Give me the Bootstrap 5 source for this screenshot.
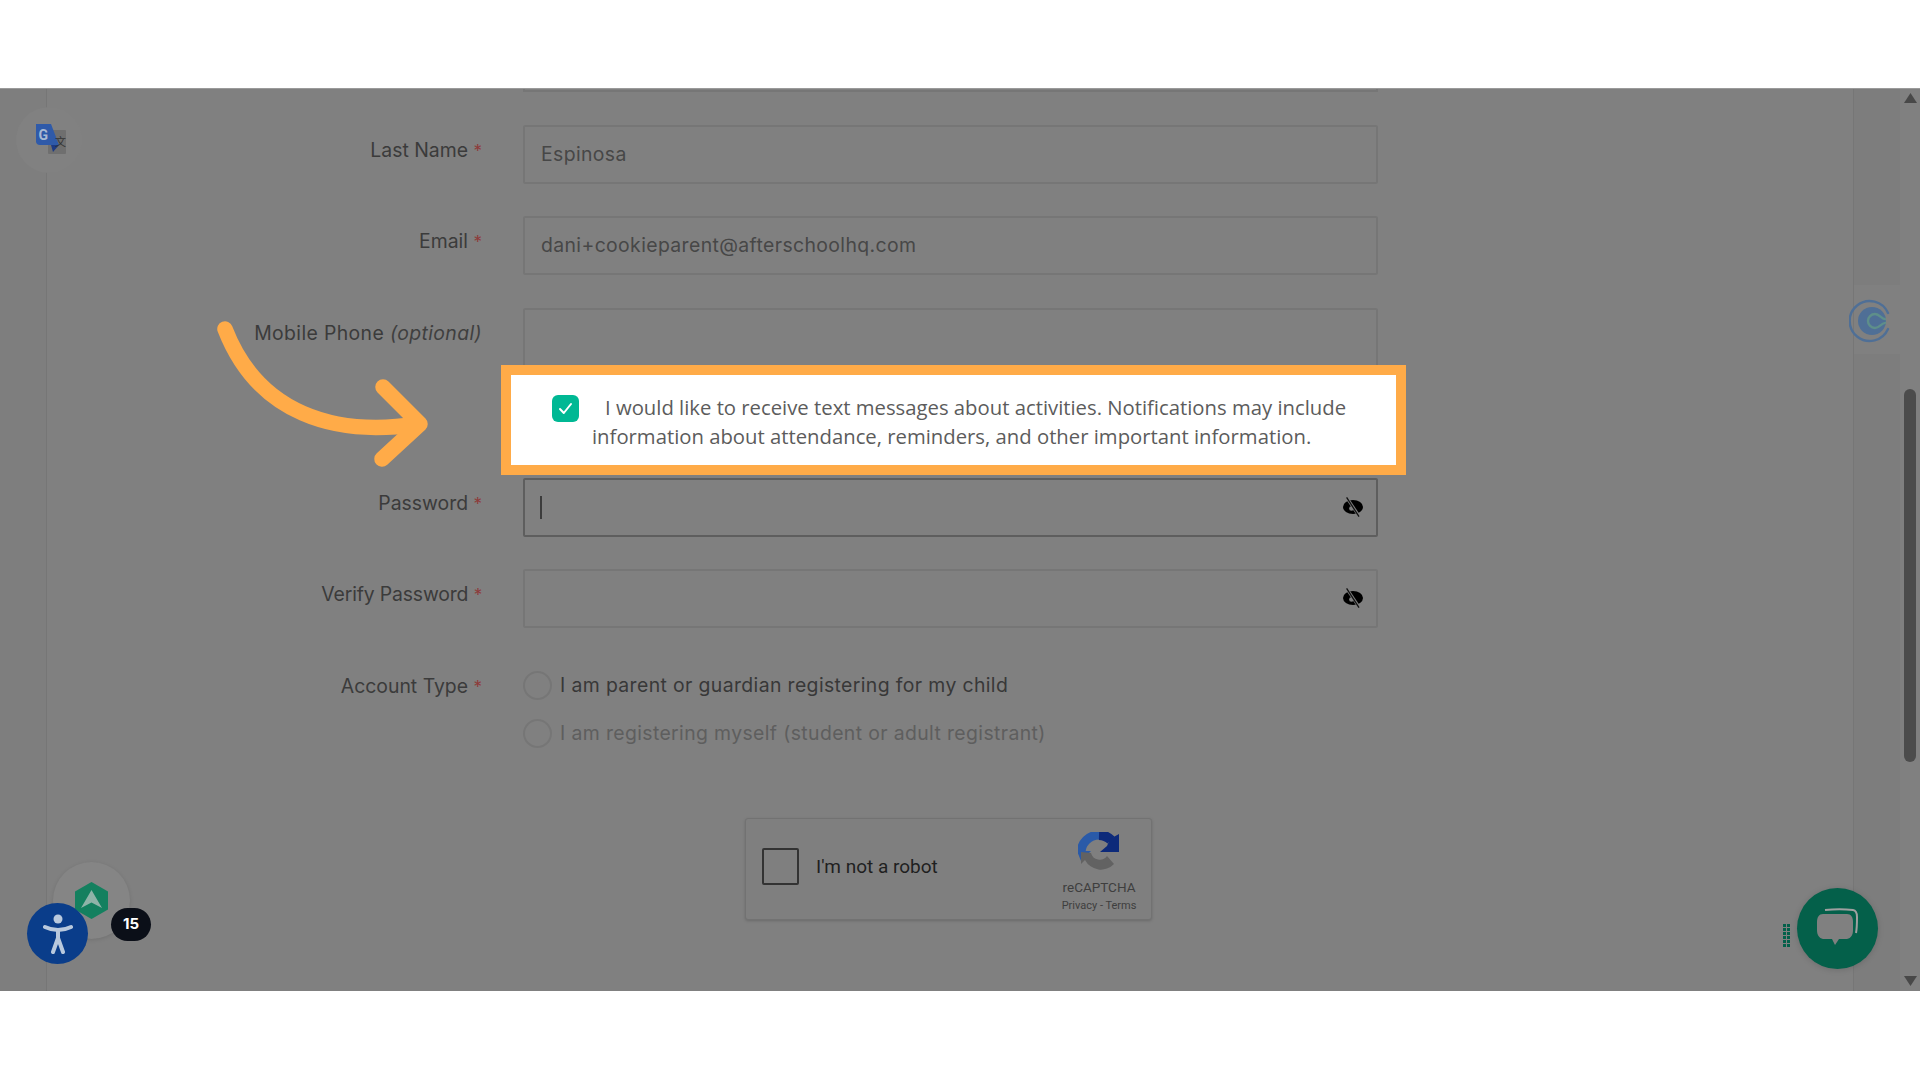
<!DOCTYPE html>
<html lang="en">
<head>
<meta charset="utf-8">
<title>Register</title>
<link href="https://cdn.jsdelivr.net/npm/bootstrap@5.3.0/dist/css/bootstrap.min.css" rel="stylesheet">
<style>
html,body{margin:0;height:1080px;background:#fff;overflow:hidden}
.stage{margin-top:88px;height:903px;background:#808080;overflow:hidden;font-family:Inter,"Liberation Sans",sans-serif;border-top:1px solid #9a9a9a}
.rail-l{left:0;top:0;bottom:0;width:47px;background:#7e7e7e;border-right:1px solid #767676}
.rail-r{left:1853px;top:0;bottom:0;width:47px;background:#7d7d7d;border-left:1px solid #767676}
.form-col{margin-left:46px;width:1332px;margin-top:-1px;letter-spacing:.38px}
.stub{height:4px;margin-left:477px;width:855px;border:2px solid #767676;border-top:0;margin-bottom:33px}
.f-row{margin-bottom:33px}
.f-row.tight{margin-bottom:32px}
.f-label{width:436px;margin-right:41px;text-align:right;font-size:19.4px;color:#3b3b3b;line-height:24px;padding-top:13px;flex:none;letter-spacing:0}
.f-label.wide{letter-spacing:.38px}
.f-label.snug{letter-spacing:-.15px}
.f-label i{color:#3f3f3f}
.req{color:#8e3a3a;font-size:17px}
.f-wrap{width:855px;flex:none}
.f-input.form-control{height:59px;width:855px;background:transparent;border:2px solid #767676;border-radius:2px;color:#474747;font-size:19.4px;padding:0 16px 2px;font-family:inherit;letter-spacing:inherit;box-shadow:none}
.f-input.focused.form-control{border-color:#5e5e5e}
.spot{margin:-35px 0 3px 455px;width:905px;height:110px;background:#fff;border:10px solid #ffab48;padding:18px 30px 0 41px;letter-spacing:0}
.tick{width:27px;height:27px;flex:none;margin:2px 13px 0 0;background:#00b894;border-radius:6px}
.spot p{margin:0;text-indent:13px;font-family:"Open Sans","Liberation Sans",sans-serif;font-size:20.3px;line-height:29px;color:#5c5c5c;white-space:nowrap}
.caret-bar{left:17px;top:18px;width:2px;height:23px;background:#3c3c3c}
.eye{right:14px;top:18px;width:22px;height:22px}
.type-row{margin-top:43px}
.type-row .f-label{padding-top:3px}
.r-line{height:29px;margin-bottom:19px;font-size:19.4px;line-height:29px;color:#383838}
.r-line.off{color:#5e5e5e}
.r-line .form-check-input{width:29px;height:29px;margin:0 8px 0 0;background-color:transparent;border:2px solid #767676;flex:none}
.cap-box{width:407px;height:102px;margin:51px 0 0 699px;background:#7f7f7f;border:1px solid #727272;border-radius:3px;box-shadow:0 1px 3px rgba(0,0,0,.18);padding:0 8px 0 16px;letter-spacing:0}
.cap-check{width:37px;height:37px;border:2px solid #333;border-radius:2px;margin-top:-6px;flex:none}
.cap-text{font-family:Roboto,"Liberation Sans",sans-serif;font-size:19px;color:#1f1f1f;margin:-4px 0 0 17px}
.cap-brand{margin-left:auto;width:88px;font-family:Roboto,"Liberation Sans",sans-serif;color:#3e3e3e;text-align:center;line-height:1;margin-top:5px}
.cap-brand svg{display:block;margin:0 auto 7px}
.cap-name{font-size:13.5px;margin-bottom:5px}
.cap-links{font-size:11px;white-space:nowrap}
.arrow{left:0;top:0;width:1920px;height:903px;pointer-events:none}
.gt-disc{left:16px;top:18px;width:66px;height:66px;border-radius:50%;background:#818181}
.gt-icon{left:34px;top:33px}
.cal-box{left:1854px;top:196px;width:46px;height:69px;background:#808080}
.cal-icon{left:1849px;top:210px}
.ah-disc{left:53px;top:773px;width:77px;height:77px;border-radius:50%;background:#858585;box-shadow:0 1px 4px rgba(0,0,0,.12)}
.ah-hex{left:75px;top:793px}
.a11y{left:27px;top:814px;width:61px;height:61px;border-radius:50%;background:#0a3d8a}
.count{left:111px;top:819px;width:40px;height:33px;border-radius:17px;background:#0b0f18;color:#fff;font-size:15px;font-weight:700;font-family:Inter,"Liberation Sans",sans-serif}
.chat{left:1797px;top:799px;width:81px;height:81px;border-radius:50%;background:#04604a;box-shadow:0 1px 6px rgba(0,0,0,.15)}
.grip{left:1783px;top:835px}
.sb-track{left:1900px;top:0;bottom:0;width:20px;background:#808080}
.sb-thumb{left:1904px;top:300px;width:12px;height:373px;border-radius:6px;background:#4c4c4c}
.sb-arrow{left:1904px}
.sb-up{top:4px}
.sb-down{top:887px}
</style>
</head>
<body>
<main class="stage position-relative">
  <div class="rail-l position-absolute"></div>
  <div class="rail-r position-absolute"></div>
  <div class="sb-track position-absolute"></div>

  <form class="form-col position-relative">
    <div class="stub"></div>
    <div class="f-row tight d-flex">
      <label class="f-label">Last Name <span class="req">*</span></label>
      <div class="f-wrap"><input class="f-input form-control" value="Espinosa"></div>
    </div>
    <div class="f-row d-flex">
      <label class="f-label">Email <span class="req">*</span></label>
      <div class="f-wrap"><input class="f-input form-control" value="dani+cookieparent@afterschoolhq.com"></div>
    </div>
    <div class="f-row d-flex">
      <label class="f-label wide">Mobile Phone <i>(optional)</i></label>
      <div class="f-wrap"><input class="f-input form-control"></div>
    </div>
    <div class="spot d-flex position-relative">
      <span class="tick d-flex align-items-center justify-content-center"><svg width="15" height="13" viewBox="0 0 15 13" fill="none"><path d="M2 7 5.800 11 13 2" stroke="#fff" stroke-width="2" stroke-linecap="round" stroke-linejoin="round"/></svg></span>
      <p>I would like to receive text messages about activities. Notifications may include<br>information about attendance, reminders, and other important information.</p>
    </div>
    <div class="f-row tight d-flex">
      <label class="f-label">Password <span class="req">*</span></label>
      <div class="f-wrap position-relative">
        <input class="f-input focused form-control" type="password">
        <span class="caret-bar position-absolute"></span>
        <svg class="eye position-absolute" viewBox="0 0 22 22"><ellipse cx="11" cy="11" rx="10" ry="7" fill="#000"/><ellipse cx="9.500" cy="12.500" rx="2.400" ry="2.200" fill="#808080"/><path d="M5 2 17 20" stroke="#808080" stroke-width="3"/><path d="M4.600 1.400 17 20.600" stroke="#111" stroke-width="1.300"/></svg>
      </div>
    </div>
    <div class="d-flex">
      <label class="f-label snug">Verify Password <span class="req">*</span></label>
      <div class="f-wrap position-relative">
        <input class="f-input form-control" type="password">
        <svg class="eye position-absolute" viewBox="0 0 22 22"><ellipse cx="11" cy="11" rx="10" ry="7" fill="#000"/><ellipse cx="9.500" cy="12.500" rx="2.400" ry="2.200" fill="#808080"/><path d="M5 2 17 20" stroke="#808080" stroke-width="3"/><path d="M4.600 1.400 17 20.600" stroke="#111" stroke-width="1.300"/></svg>
      </div>
    </div>
    <div class="type-row d-flex">
      <label class="f-label">Account Type <span class="req">*</span></label>
      <div class="f-wrap">
        <div class="r-line d-flex align-items-center"><input class="form-check-input" type="radio" name="t"><span>I am parent or guardian registering for my child</span></div>
        <div class="r-line off d-flex align-items-center"><input class="form-check-input" type="radio" name="t"><span>I am registering myself (student or adult registrant)</span></div>
      </div>
    </div>
    <div class="cap-box d-flex align-items-center">
      <div class="cap-check"></div>
      <div class="cap-text">I'm not a robot</div>
      <div class="cap-brand">
        <svg width="42" height="42" viewBox="0 0 42 42" fill="none">
          <path d="M21 3A18 18 0 0 0 3 21" stroke="#2a5aa8" stroke-width="9"/>
          <path d="M-1 19H13L3 29z" fill="#2a5aa8"/>
          <path d="M21 3A18 18 0 0 1 33 8" stroke="#0d2a7a" stroke-width="10"/>
          <path d="M41 2V20H22L29 14 32 7z" fill="#0d2a7a"/>
          <path d="M3 20V32L7 28A18 18 0 0 0 36 32L29 24A9 9 0 0 1 13 21z" fill="#626262"/>
        </svg>
        <div class="cap-name">reCAPTCHA</div>
        <div class="cap-links">Privacy - Terms</div>
      </div>
    </div>
  </form>

  <svg class="arrow position-absolute" viewBox="0 0 1920 903" fill="none"><g stroke="#ffab48" stroke-width="15.500" stroke-linecap="round" stroke-linejoin="round"><path d="M225 240C258 325 335 348 418 335"/><path d="M383 298 420 335 382 370"/></g></svg>

  <div class="gt-disc position-absolute"></div>
  <svg class="gt-icon position-absolute" width="34" height="34" viewBox="0 0 34 34"><rect x="14" y="8" width="18" height="24" rx="1" fill="#6f6f6f"/><path d="M2 2h15l8 21H6a4 4 0 0 1-4-3z" fill="#2f5aa9"/><path d="M17 23h8l-6 7z" fill="#1d3a85"/><text x="4.500" y="17.500" font-size="14" font-weight="700" font-family="Roboto,sans-serif" fill="#a9b8d2">G</text><text x="21" y="24" font-size="11" font-family="Noto Sans CJK SC,sans-serif" fill="#333">文</text></svg>

  <div class="cal-box position-absolute"></div>
  <svg class="cal-icon position-absolute" width="46" height="44" viewBox="0 0 44 44" fill="none"><circle cx="22" cy="22" r="14" fill="#4f6f96"/><path d="M38 14A20 20 0 1 0 38 30" stroke="#4f6f96" stroke-width="2.400" stroke-linecap="round"/><path d="M36 20c-4 1-6-5-11-5a7 7 0 0 0 0 14c5 0 7-6 11-5" stroke="#5e8f8a" stroke-width="2.400"/></svg>

  <div class="ah-disc position-absolute"></div>
  <svg class="ah-hex position-absolute" width="33" height="37" viewBox="0 0 33 37"><path d="M16.500 0 33 9.500v18L16.500 37 0 27.500v-18z" fill="#14805f"/><path d="M16.500 8 27 26l-10.500-5.500L6 26z" fill="#8fb3a8"/></svg>
  <div class="a11y position-absolute d-flex align-items-center justify-content-center">
    <svg width="30" height="40" viewBox="0 0 30 40" fill="none" stroke="#b9c9dd" stroke-width="4" stroke-linecap="round" stroke-linejoin="round"><circle cx="15" cy="5" r="4.500" fill="#b9c9dd" stroke="none"/><path d="M2 13c4 2 9 3 13 3s9-1 13-3M15 16v8M15 24l-5 14M15 24l5 14"/></svg>
  </div>
  <div class="count position-absolute d-flex align-items-center justify-content-center">15</div>

  <svg class="grip position-absolute" width="8" height="23" viewBox="0 0 8 23" fill="#04604a"><path d="M0 0h3v3H0zM4 0h3v3H4zM0 4h3v3H0zM4 4h3v3H4zM0 8h3v3H0zM4 8h3v3H4zM0 12h3v3H0zM4 12h3v3H4zM0 16h3v3H0zM4 16h3v3H4zM0 20h3v3H0zM4 20h3v3H4z"/></svg>
  <div class="chat position-absolute d-flex align-items-center justify-content-center">
    <svg width="46" height="42" viewBox="0 0 46 42" fill="none"><path d="M10 2c9-1 20-1 28 0 3 .5 4 3 4 7 0 6 0 11-1 16" stroke="#a0a0a0" stroke-width="2"/><path d="M8 6h24c4 0 6 3 6 8v8c0 5-2 8-6 9H24l-4 6-3-6H8c-4-1-6-4-6-9v-8c0-5 2-8 6-8z" fill="#808080"/></svg>
  </div>

  <div class="sb-thumb position-absolute"></div>
  <svg class="sb-arrow sb-up position-absolute" width="13" height="10" viewBox="0 0 13 10"><path d="M6.500 0 13 10H0z" fill="#484848"/></svg>
  <svg class="sb-arrow sb-down position-absolute" width="13" height="10" viewBox="0 0 13 10"><path d="M6.500 10 13 0H0z" fill="#484848"/></svg>
</main>
<script src="https://cdn.jsdelivr.net/npm/bootstrap@5.3.0/dist/js/bootstrap.bundle.min.js"></script>
</body>
</html>
